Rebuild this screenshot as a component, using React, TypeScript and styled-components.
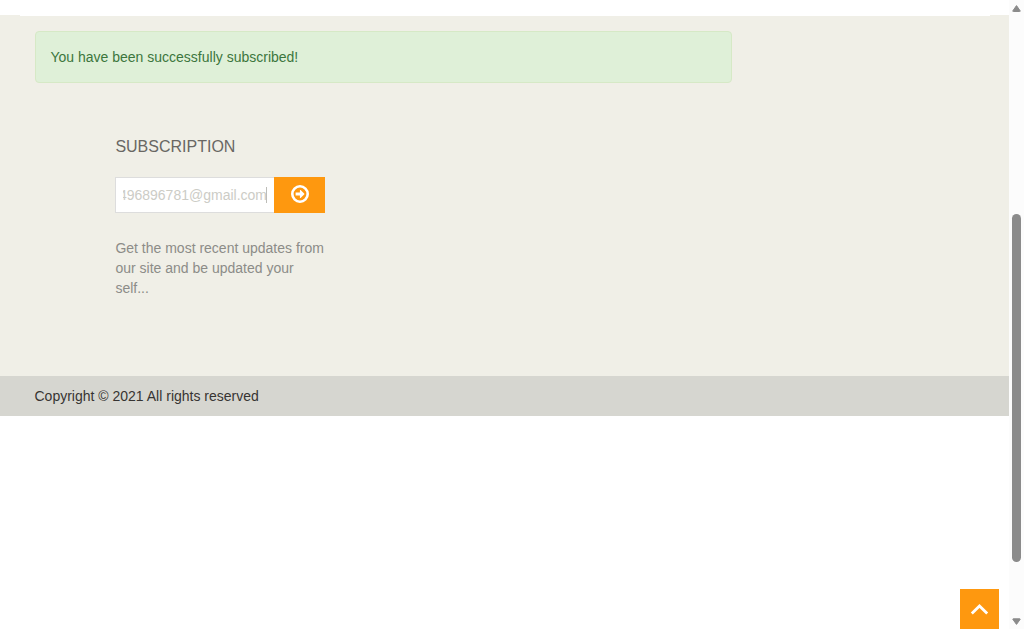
import React from 'react';
import styled, { createGlobalStyle } from 'styled-components';

const GlobalStyle = createGlobalStyle`
  * { box-sizing: border-box; }
  html, body { margin: 0; padding: 0; overflow: hidden; background: #fff; }
  body { font-family: "Liberation Sans", Arial, sans-serif; font-size: 14px; line-height: 20px; color: #3e3e3b; }
`;

const Screen = styled.div`
  display: grid;
  grid-template-columns: 1fr 15px;
  width: 1024px;
  height: 629px;
  background: #fff;
`;

const Page = styled.div`
  position: relative;
  padding-top: 15px;
`;

const Footer = styled.footer`
  height: 361px;
  background: #f0efe7;
`;

const ContentEdge = styled.div`
  height: 1px;
  margin: 0 19px 0 20px;
  background: #fff;
`;

const Alert = styled.div`
  width: 697px;
  height: 52px;
  margin: 15px 0 0 35px;
  padding: 15px 14.5px;
  border: 1px solid #d6e9c6;
  border-radius: 4px;
  background: #dff0d8;
  color: #3c763d;
`;

const Subscription = styled.section`
  width: 210px;
  margin: 55px 0 0 115px;
`;

const Title = styled.h2`
  margin: 0;
  padding-left: 0.4px;
  font-size: 16px;
  font-weight: 400;
  line-height: 18px;
  color: #696763;
`;

const Form = styled.div`
  display: flex;
  height: 36px;
  margin-top: 21px;
`;

const EmailField = styled.div`
  display: flex;
  align-items: center;
  width: 159px;
  padding: 0 7px;
  border: 1px solid #ddd;
  border-right: 0;
  background: #fff;
  color: #ccccc6;
`;

const EmailView = styled.div`
  display: flex;
  justify-content: flex-end;
  align-items: center;
  width: 144px;
  height: 20px;
  overflow: hidden;
  white-space: nowrap;
`;

const Caret = styled.i`
  flex: none;
  width: 1px;
  height: 16px;
  margin-left: -1px;
  background: #bdbdb8;
`;

const SubmitButton = styled.button`
  display: flex;
  justify-content: center;
  width: 51px;
  padding: 8px 0 0;
  border: 0;
  background: #fe980f;
  color: #fff;
`;

const Note = styled.p`
  margin: 25px -1px 0 0;
  padding-left: 0.4px;
  color: #8c8c88;
`;

const Copyright = styled.div`
  height: 40px;
  padding: 10px 34.5px;
  background: #d6d6d0;
  color: #363432;
`;

const ScrollTop = styled.button`
  position: absolute;
  right: 10px;
  bottom: 0;
  display: flex;
  width: 39px;
  height: 40px;
  padding: 14px 0 0 10px;
  border: 0;
  background: #fe980f;
`;

const ScrollBar = styled.div`
  display: flex;
  flex-direction: column;
  align-items: center;
  padding: 4px 0 3px;
  background: #fcfcfc;
`;

const Thumb = styled.div`
  width: 9px;
  height: 348px;
  margin: 202px 0 auto 0;
  border-radius: 5px;
  background: #8b8b8b;
`;

export default function App() {
  return (
    <>
      <GlobalStyle />
      <Screen>
        <Page>
          <Footer>
            <ContentEdge />
            <Alert>You have been successfully subscribed!</Alert>
            <Subscription>
              <Title>SUBSCRIPTION</Title>
              <Form>
                <EmailField>
                  <EmailView>
                    <span>496896781@gmail.com</span>
                    <Caret />
                  </EmailView>
                </EmailField>
                <SubmitButton aria-label="Subscribe">
                  <svg width="18" height="18" viewBox="0 0 18 18" fill="none">
                    <circle cx="9" cy="9" r="7.7" stroke="#fff" strokeWidth="2.6" />
                    <path d="M4.6 7.5H8.9V5.2Q9.1 4.7 9.6 5L13.4 8.8Q13.5 9 13.4 9.2L9.6 13Q9.1 13.3 8.9 12.8V10.5H4.6Z" fill="#fff" />
                  </svg>
                </SubmitButton>
              </Form>
              <Note>Get the most recent updates from our site and be updated your self...</Note>
            </Subscription>
          </Footer>
          <Copyright>Copyright © 2021 All rights reserved</Copyright>
          <ScrollTop aria-label="Back to top">
            <svg width="19" height="12" viewBox="0 0 19 12" fill="none">
              <path d="M1.8 10.6L9.5 3L17.2 10.6" stroke="#fff" strokeWidth="2.8" />
            </svg>
          </ScrollTop>
        </Page>
        <ScrollBar>
          <svg width="9" height="8" viewBox="0 0 9 8">
            <path d="M4.5 1.6L8 6.6Q8.6 7.5 7.6 7.5H1.4Q.4 7.5 1 6.6Z" fill="#8b8b8b" stroke="#8b8b8b" strokeWidth="1" strokeLinejoin="round" />
          </svg>
          <Thumb />
          <svg width="9" height="8" viewBox="0 0 9 8">
            <path d="M1.2 .8H7.8Q8.5 .8 8 1.6L4.5 6.4L1 1.6Q.5 .8 1.2 .8Z" fill="#8b8b8b" stroke="#8b8b8b" strokeWidth="1" strokeLinejoin="round" />
          </svg>
        </ScrollBar>
      </Screen>
    </>
  );
}
